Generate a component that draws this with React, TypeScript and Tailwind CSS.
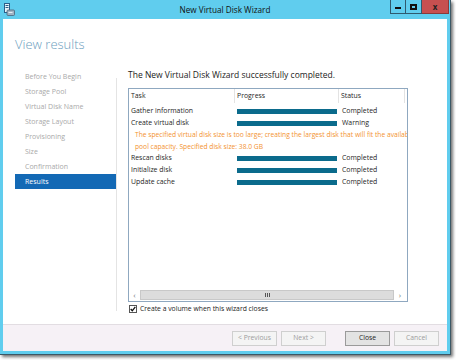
import React from "react";

const font = { fontFamily: '"Open Sans", "Noto Sans", sans-serif' };

function TitleIcon() {
  return (
    <svg width="11" height="13" viewBox="0 0 11 13">
      <rect x="0.5" y="0.5" width="5" height="9" fill="#e8f4fa" stroke="#2a5f8a" />
      <rect x="1.5" y="2" width="3" height="1" fill="#2a5f8a" />
      <rect x="1.5" y="4" width="3" height="1" fill="#2a5f8a" />
      <rect x="3" y="7" width="7.5" height="5.5" rx="1" fill="#9fb3c4" stroke="#4a6378" strokeWidth="0.8" />
      <rect x="4.5" y="9" width="4" height="1" fill="#e6eef4" />
    </svg>
  );
}

const navItems = [
  "Before You Begin",
  "Storage Pool",
  "Virtual Disk Name",
  "Storage Layout",
  "Provisioning",
  "Size",
  "Confirmation",
];

function Row({ task, status }: { task: string; status: string }) {
  return (
    <div className="flex h-[12px] items-center text-[6.9px] text-[#1e1e1e] leading-none">
      <div className="w-[106px] pl-[2px] whitespace-nowrap">{task}</div>
      <div className="w-[104px] pl-[2px]">
        <div className="h-[5px] w-[100px] bg-[#0b6b8c]" />
      </div>
      <div className="pl-[3px] whitespace-nowrap">{status}</div>
    </div>
  );
}

function Btn({ label, primary }: { label: string; primary?: boolean }) {
  return (
    <div
      className={
        "h-[15px] w-[45px] flex items-center justify-center text-[6.8px] leading-none border whitespace-nowrap " +
        (primary
          ? "bg-[#e3e3e3] border-[#9a9a9a] text-[#1e1e1e]"
          : "bg-[#f4f4f4] border-[#cfcfcf] text-[#9d9d9d]")
      }
    >
      {label}
    </div>
  );
}

export default function App() {
  return (
    <div className="w-[456px] h-[360px] bg-white relative overflow-hidden" style={font}>
      <div className="w-[451px] h-[355px] bg-[#60cdee] flex flex-col border-r border-b border-[#3c5866] shadow-[2px_2px_3px_rgba(0,0,0,0.55)]">
        {/* title bar */}
        <div className="h-[19px] flex items-start relative">
          <div className="pl-[4px] pt-[3px]">
            <TitleIcon />
          </div>
          <div className="absolute left-0 right-0 top-[4px] text-center text-[8.2px] leading-[12px] text-[#111]">
            New Virtual Disk Wizard
          </div>
          <div className="absolute top-0 right-[1px] flex">
            <div className="w-[16px] h-[14px] border border-[#2f5a6e] border-t-0 flex items-center justify-center">
              <div className="w-[6px] h-[2px] bg-[#111] mt-[3px]" />
            </div>
            <div className="w-[16px] h-[14px] border border-[#2f5a6e] border-t-0 border-l-0 flex items-center justify-center">
              <div className="w-[7px] h-[6px] border-2 border-[#111]" />
            </div>
            <div className="w-[27px] h-[14px] bg-[#c75050] border border-[#8a3a3a] border-t-0 border-l-0 flex items-center justify-center">
              <span className="text-[8px] font-bold leading-none text-[#222]">x</span>
            </div>
          </div>
        </div>
        {/* body */}
        <div className="flex-1 mx-[3px] mb-[3px] bg-white flex flex-col">
          <div className="flex-1 flex flex-col pl-[12px]">
            <div className="pt-[17px] h-[35px] text-[13px] leading-[16px] font-light text-[#6a9dbd]">View results</div>
            <div className="flex mt-[13px]">
              <div className="w-[101px] pt-[2px] flex flex-col">
                {navItems.map((n) => (
                  <div key={n} className="h-[15px] pl-[10px] flex items-center text-[7px] leading-none text-[#a9a9a9] whitespace-nowrap">
                    {n}
                  </div>
                ))}
                <div className="h-[15px] pl-[10px] flex items-center text-[7px] leading-none text-white bg-[#1369b5]">
                  Results
                </div>
              </div>
              <div className="w-px h-[233px] mt-[11px] bg-[#e4e4e4]" />
              <div className="pl-[11px] flex flex-col">
                <div className="h-[16px] flex items-center text-[8.5px] leading-none text-[#222] whitespace-nowrap">
                  The New Virtual Disk Wizard successfully completed.
                </div>
                <div className="mt-[5px] w-[280px] h-[214px] border border-[#8fa8c0] flex flex-col overflow-hidden">
                  <div className="flex h-[14px] items-center text-[6.9px] leading-none text-[#1e1e1e]">
                    <div className="w-[106px] h-full pl-[2px] flex items-center border-r border-[#e3e3e3]">Task</div>
                    <div className="w-[104px] h-full pl-[2px] flex items-center border-r border-[#e3e3e3]">Progress</div>
                    <div className="w-[66px] h-full pl-[2px] flex items-center border-r border-[#e3e3e3]">Status</div>
                  </div>
                  <div className="flex-1 pt-[2px] overflow-hidden">
                    <Row task="Gather information" status="Completed" />
                    <Row task="Create virtual disk" status="Warning" />
                    <div className="pl-[6px] h-[23px] text-[6.7px] leading-[11.5px] text-[#f39230] whitespace-nowrap overflow-hidden">
                      <div>The specified virtual disk size is too large; creating the largest disk that will fit the availab</div>
                      <div>pool capacity. Specified disk size: 38.0 GB</div>
                    </div>
                    <Row task="Rescan disks" status="Completed" />
                    <Row task="Initialize disk" status="Completed" />
                    <Row task="Update cache" status="Completed" />
                  </div>
                  <div className="h-[10px] flex items-stretch mb-[1px]">
                    <div className="w-[11px] flex items-center justify-center text-[8px] leading-none text-[#777]">‹</div>
                    <div className="w-[254px] bg-[#dcdcdc] border border-[#c8c8c8] flex items-center justify-center">
                      <div className="flex gap-[1px]">
                        <div className="w-px h-[4px] bg-[#555]" />
                        <div className="w-px h-[4px] bg-[#555]" />
                        <div className="w-px h-[4px] bg-[#555]" />
                      </div>
                    </div>
                    <div className="w-[12px] flex items-center justify-center text-[8px] leading-none text-[#777]">›</div>
                  </div>
                </div>
                <div className="flex items-center mt-[1px] h-[12px]">
                  <div className="w-[8px] h-[8px] border border-[#555] bg-white flex items-center justify-center ml-[1px]">
                    <svg width="6" height="6" viewBox="0 0 6 6">
                      <path d="M0.7 3 L2.3 4.8 L5.3 0.8" fill="none" stroke="#111" strokeWidth="1.3" />
                    </svg>
                  </div>
                  <span className="ml-[3px] text-[6.8px] leading-none text-[#222] whitespace-nowrap">Create a volume when this wizard closes</span>
                </div>
              </div>
            </div>
          </div>
          <div className="h-[27px] bg-[#f6f1f6] border-t border-[#e2dde2] flex items-center pl-[229px]">
            <Btn label="< Previous" />
            <div className="ml-[4px]">
              <Btn label="Next >" />
            </div>
            <div className="ml-[19px]">
              <Btn label="Close" primary />
            </div>
            <div className="ml-[4px]">
              <Btn label="Cancel" />
            </div>
          </div>
        </div>
      </div>
    </div>
  );
}
